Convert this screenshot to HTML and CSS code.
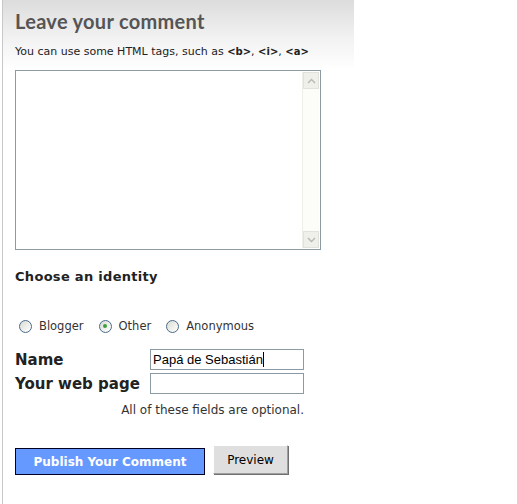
FILE: index.html
```html
<!DOCTYPE html>
<html lang="en">
<head>
    <meta charset="UTF-8">
    <title>Leave your comment</title>
    <link rel="stylesheet" href="styles.css">
</head>
<body>
    <div class="comment-box">
        <div class="comment-head">
            <h2>Leave your comment</h2>
            <p class="hint">You can use some HTML tags, such as <b>&lt;b&gt;</b>, <b>&lt;i&gt;</b>, <b>&lt;a&gt;</b></p>
        </div>

        <div class="textarea-wrap">
            <div class="text-body"></div>
            <div class="scrollbar">
                <span class="arrow up"><svg width="9" height="6" viewBox="0 0 9 6"><path d="M1 5 L4.5 1.5 L8 5" fill="none" stroke="#b8b8b0" stroke-width="1.4"/></svg></span>
                <span class="arrow down"><svg width="9" height="6" viewBox="0 0 9 6"><path d="M1 1 L4.5 4.5 L8 1" fill="none" stroke="#b8b8b0" stroke-width="1.4"/></svg></span>
            </div>
        </div>

        <h3>Choose an identity</h3>

        <div class="identity">
            <label><span class="radio"></span>Blogger</label>
            <label><span class="radio checked"></span>Other</label>
            <label><span class="radio"></span>Anonymous</label>
        </div>

        <div class="fields">
            <div class="field-row">
                <span class="field-label">Name</span>
                <div class="field-input">Papá de Sebastián<span class="caret"></span></div>
            </div>
            <div class="field-row">
                <span class="field-label">Your web page</span>
                <div class="field-input"></div>
            </div>
            <p class="optional">All of these fields are optional.</p>
        </div>

        <div class="buttons">
            <button class="publish-button">Publish Your Comment</button>
            <button class="preview-button">Preview</button>
        </div>
    </div>
</body>
</html>
```

FILE: styles.css
```css
body {
    margin: 0;
    background-color: #ffffff;
    font-family: 'DejaVu Sans', Verdana, sans-serif;
}
.comment-box {
    border-left: 1px solid #c8c8c8;
    margin-left: 2px;
    width: 352px;
    min-height: 504px;
    box-sizing: border-box;
    padding-left: 12px;
}
.comment-head {
    background: linear-gradient(to bottom, #dcdcdc 0%, #f2f2f2 55%, #ffffff 100%);
    margin-left: -12px;
    padding: 9px 0 12px 12px;
}
h2 {
    margin: 0;
    font-family: Lato, 'DejaVu Sans', sans-serif;
    font-size: 20px;
    font-weight: bold;
    color: #555555;
    letter-spacing: 0.3px;
}
.hint {
    margin: 12px 0 0;
    font-size: 11px;
    color: #222222;
}
.hint b {
    font-size: 10px;
}
.textarea-wrap {
    display: flex;
    width: 306px;
    height: 180px;
    box-sizing: border-box;
    border: 1px solid #8c9aa4;
    background-color: #ffffff;
}
.text-body {
    flex: 1;
}
.scrollbar {
    width: 16px;
    margin: 1px 1px 1px 0;
    background-color: #fcfcf8;
    border-left: 1px solid #eeeeea;
    display: flex;
    flex-direction: column;
    justify-content: space-between;
}
.arrow {
    height: 15px;
    display: flex;
    align-items: center;
    justify-content: center;
    background-color: #f0f0ea;
    border: 1px solid #e2e2dc;
}
h3 {
    margin: 19px 0 0;
    font-size: 13px;
    font-weight: bold;
    color: #222222;
    letter-spacing: 0.3px;
}
.identity {
    display: flex;
    margin: 35px 0 0 4px;
    font-size: 11.5px;
    color: #333333;
}
.identity label {
    display: flex;
    align-items: center;
    margin-right: 15px;
}
.radio {
    width: 11px;
    height: 11px;
    border: 1px solid #4a6a8a;
    border-radius: 50%;
    margin-right: 7px;
    background: linear-gradient(135deg, #dcdcd4, #ffffff);
    display: flex;
    align-items: center;
    justify-content: center;
}
.radio.checked::after {
    content: "";
    width: 4px;
    height: 4px;
    border-radius: 50%;
    background-color: #3ca03c;
}
.fields {
    width: 289px;
    margin-top: 15px;
}
.field-row {
    display: flex;
    justify-content: space-between;
    align-items: center;
    height: 23px;
    margin-bottom: 1px;
}
.field-label {
    font-size: 15px;
    font-weight: bold;
    color: #222222;
}
.field-input {
    width: 154px;
    height: 21px;
    box-sizing: border-box;
    border: 1px solid #8c9aa4;
    font-family: 'Liberation Sans', Arial, sans-serif;
    font-size: 13px;
    line-height: 19px;
    padding-left: 2px;
    color: #000000;
    display: flex;
    align-items: center;
}
.caret {
    width: 1px;
    height: 15px;
    background-color: #000000;
}
.optional {
    margin: 8px 0 0;
    text-align: right;
    font-size: 12px;
    color: #333333;
}
.buttons {
    display: flex;
    align-items: flex-end;
    margin-top: 28px;
}
.publish-button {
    width: 190px;
    height: 27px;
    background-color: #6699ff;
    border: 1px solid #000022;
    color: #ffffff;
    font-family: 'DejaVu Sans', Verdana, sans-serif;
    font-weight: bold;
    font-size: 12px;
    margin-right: 8px;
}
.preview-button {
    width: 75px;
    height: 29px;
    margin-bottom: 1px;
    background-color: #dfdfdf;
    border: 1px solid;
    border-color: #ffffff #a0a0a0 #a0a0a0 #ffffff;
    box-shadow: 1px 1px 0 #707070;
    color: #000000;
    font-family: 'DejaVu Sans', Verdana, sans-serif;
    font-size: 12px;
}
```
